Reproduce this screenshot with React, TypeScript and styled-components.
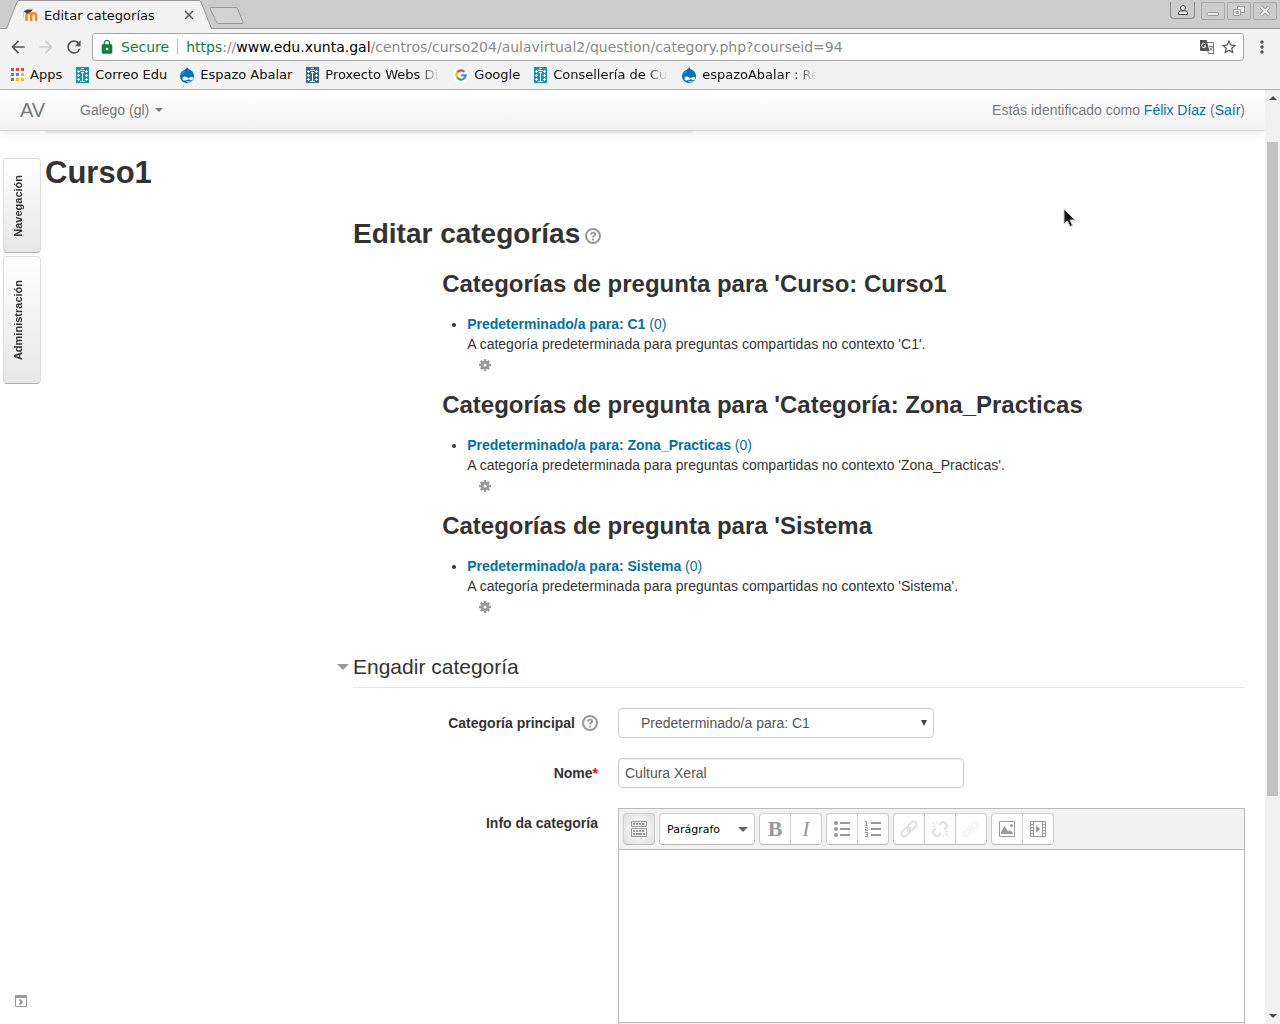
import React from "react";
import styled, { createGlobalStyle, css } from "styled-components";
import { MdArrowBack, MdArrowForward, MdRefresh, MdLock, MdStarBorder, MdMoreVert } from "react-icons/md";

const ui = `"DejaVu Sans", sans-serif`;
const sans = `"Liberation Sans", Arial, sans-serif`;
const serif = `"Liberation Serif", "Times New Roman", serif`;

const GlobalStyle = createGlobalStyle`
  *, *::before, *::after { box-sizing: border-box; }
  body { margin: 0; overflow: hidden; background: #fff; }
  button, input, select { margin: 0; font: inherit; color: inherit; }
  button { padding: 0; border: 0; background: none; cursor: pointer; }
  svg { display: block; flex: none; }
  a { color: #0070a8; text-decoration: none; }
`;

/* ---------- Browser chrome ---------- */

const Browser = styled.div`
  display: flex;
  flex-direction: column;
  height: 100vh;
  overflow: hidden;
`;

const TabStrip = styled.div`
  display: flex;
  justify-content: space-between;
  flex: none;
  height: 29px;
  padding-left: 5px;
  background: #ccc;
  box-shadow: inset 0 -1px #999;
`;

const TabList = styled.div`
  display: flex;
`;

const Tab = styled.div`
  display: flex;
  height: 29px;
`;

const TabBody = styled.div`
  display: flex;
  align-items: center;
  width: 180px;
  padding: 0 2px 0 3px;
  gap: 6px;
  border-top: 1px solid #999;
  background: #f2f2f2;
  font: 13px ${ui};
  color: #111;
`;

const TabTitle = styled.span`
  flex: 1;
  white-space: nowrap;
`;

const NewTab = styled.button`
  display: flex;
  align-items: center;
  height: 29px;
  margin-left: -4px;
`;

const WindowControls = styled.div`
  display: flex;
  gap: 2px;
  padding: 2px 3px 0 0;
`;

const WindowButton = styled.button<{ $profile?: boolean }>`
  display: grid;
  place-items: center;
  width: 24px;
  height: 18px;
  border: 1px solid #aaa;
  border-radius: 2px;
  ${(p) =>
    p.$profile &&
    css`
      width: 25px;
      height: 17px;
      margin-right: 4px;
      border-color: #888;
      border-top: 0;
      border-radius: 0 0 4px 4px;
    `}
`;

const Toolbar = styled.div`
  display: flex;
  align-items: center;
  flex: none;
  height: 36px;
  padding: 0 8px;
  gap: 8px;
  background: #f2f2f2;
  color: #555;
`;

const ToolButton = styled.button<{ $dim?: boolean }>`
  display: grid;
  place-items: center;
  width: 20px;
  height: 20px;
  color: ${(p) => (p.$dim ? "#ccc" : "#555")};
`;

const AddressBar = styled.div`
  display: flex;
  align-items: center;
  flex: 1;
  height: 28px;
  padding: 0 4px 0 6px;
  gap: 8px;
  border: 1px solid #a8a8a8;
  border-radius: 3px;
  background: #fff;
  font: 14px ${ui};
  color: #888;
  white-space: nowrap;
`;

const AddressActions = styled.div`
  display: flex;
  gap: 2px;
`;

const Secure = styled.span`
  display: flex;
  align-items: center;
  gap: 6px;
  padding-right: 8px;
  border-right: 1px solid #bbb;
  line-height: 16px;
  color: #0b8043;
`;

const Url = styled.span`
  flex: 1;
  overflow: hidden;
`;

const Scheme = styled.span`
  color: #0b8043;
`;

const Host = styled.span`
  color: #000;
`;

const Bookmarks = styled.nav`
  display: flex;
  align-items: center;
  flex: none;
  height: 25px;
  padding: 0 9px 4px;
  gap: 12px;
  border-bottom: 1px solid #b0b0b0;
  background: #f2f2f2;
`;

const Bookmark = styled.a`
  display: flex;
  align-items: center;
  gap: 5px;
  font: 13px/16px ${ui};
  color: #111;
  white-space: nowrap;
`;

const BookmarkName = styled.span<{ $fade?: boolean }>`
  max-width: 116px;
  ${(p) =>
    p.$fade &&
    css`
      overflow: hidden;
      mask-image: linear-gradient(to right, #000 80%, transparent 99%);
    `}
`;

/* ---------- Page frame ---------- */

const Viewport = styled.div`
  display: flex;
  flex: 1;
  min-height: 0;
`;

const Page = styled.div`
  position: relative;
  flex: 1;
  min-width: 0;
  overflow: hidden;
  background: #fff;
  font: 14px/20px ${sans};
  color: #333;
`;

const ScrollTrack = styled.div`
  display: flex;
  flex-direction: column;
  justify-content: space-between;
  align-items: center;
  width: 15px;
  padding: 6px 0;
  background: #f1f1f1;
`;

const ScrollThumb = styled.div`
  width: 11px;
  height: 71%;
  margin-bottom: 176px;
  background: #c1c1c1;
`;

const Navbar = styled.header`
  position: relative;
  z-index: 1;
  display: flex;
  align-items: center;
  height: 41px;
  padding: 0 20px;
  border-bottom: 1px solid #d4d4d4;
  background: linear-gradient(#fff, #f2f2f2);
  box-shadow: 0 1px 10px rgba(0, 0, 0, 0.1);
  color: #777;
  text-shadow: 0 1px 0 #fff;
`;

const Brand = styled.a`
  width: 60px;
  font-size: 20px;
  color: #777;
`;

const Language = styled.button`
  display: flex;
  align-items: center;
  gap: 6px;
`;

const LoginInfo = styled.div`
  margin-left: auto;
`;

const Breadcrumb = styled.div`
  width: 54%;
  height: 2px;
  border-radius: 0 0 4px 4px;
  background: #f0f0f0;
`;

const Content = styled.div`
  padding: 0 20px 0 45px;
`;

const CourseTitle = styled.h1`
  margin: 20px 0 21px;
  font: bold 31px/40px ${sans};
`;

const Main = styled.main`
  margin-left: 308px;
`;

const PageTitle = styled.h2`
  margin: 0 0 10px;
  font: bold 28px/40px ${sans};
`;

const HelpButton = styled.button<{ $inline?: boolean }>`
  display: inline-grid;
  place-items: center;
  width: 16px;
  height: 16px;
  margin-left: ${(p) => (p.$inline ? 5 : 0)}px;
  vertical-align: middle;
`;

const Categories = styled.section`
  margin: 0 10%;
`;

const CategoryHeading = styled.h3`
  margin: 10px 0;
  font: bold 24px/40px ${sans};
`;

const CategoryList = styled.ul`
  margin: 0 0 10px 25px;
  padding: 0;
`;

const CategoryActions = styled.div`
  display: flex;
  align-items: center;
  height: 21px;
  padding-left: 12px;
`;

/* ---------- Form ---------- */

const Fieldset = styled.fieldset`
  min-width: 0;
  margin: 30px 0 0;
  padding: 0;
  border: 0;
`;

const Legend = styled.legend`
  width: 100%;
  margin-bottom: 20px;
  padding: 0;
  border-bottom: 1px solid #e5e5e5;
`;

const LegendToggle = styled.button`
  display: flex;
  align-items: center;
  gap: 4px;
  margin-left: -16px;
  font: 21px/40px ${sans};
`;

const Field = styled.div`
  display: grid;
  grid-template-columns: 245px 1fr;
  gap: 20px;
  margin-bottom: 20px;
`;

const FieldLabel = styled.div`
  display: flex;
  justify-content: flex-end;
  align-items: center;
  gap: 7px;
  height: 30px;
  font-weight: bold;
`;

const Required = styled.span`
  color: #f00;
`;

const SelectBox = styled.div`
  display: flex;
  align-items: center;
  width: 316px;
  height: 30px;
  border: 1px solid #ccc;
  border-radius: 4px;
  background: #fff;
  color: #555;

  svg {
    margin-left: -12px;
    pointer-events: none;
  }
`;

const Select = styled.select`
  appearance: none;
  width: 100%;
  height: 28px;
  padding: 0 22px;
  border: 0;
  background: transparent;
`;

const TextInput = styled.input`
  width: 346px;
  height: 30px;
  padding: 4px 6px;
  border: 1px solid #ccc;
  border-radius: 4px;
  background: #fff;
  box-shadow: inset 0 1px 1px rgba(0, 0, 0, 0.075);
  color: #555;
`;

const Editor = styled.div`
  border: 1px solid #bbb;
  background: #f2f2f2;
`;

const EditorTools = styled.div`
  display: flex;
  gap: 4px;
  padding: 4px;
  border-bottom: 1px solid #bbb;
`;

const ToolGroup = styled.div<{ $pressed?: boolean }>`
  display: flex;
  height: 32px;
  border: 1px solid #ccc;
  border-bottom-color: #bbb;
  border-radius: 4px;
  background: ${(p) => (p.$pressed ? "radial-gradient(#fff, #dfdfdf)" : "#fff")};

  button + button {
    width: 31px;
    border-left: 1px solid #ccc;
  }
`;

const EditorButton = styled.button<{ $italic?: boolean }>`
  display: grid;
  place-items: center;
  width: 30px;
  height: 30px;
  font: ${(p) => (p.$italic ? "italic" : "bold")} 22px/30px ${serif};
  color: #999;
`;

const FadedIcon = styled.span<{ $level: number }>`
  opacity: ${(p) => p.$level};
`;

const StyleButton = styled.button`
  display: flex;
  justify-content: space-between;
  align-items: center;
  width: 94px;
  padding: 0 6px 0 7px;
  font: 11px ${ui};
  color: #000;
`;

const EditorBody = styled.div`
  height: 173px;
  margin-bottom: 30px;
  border-bottom: 1px solid #bbb;
  background: #fff;
  outline: 0;
`;

/* ---------- Overlays ---------- */

const Dock = styled.div`
  position: absolute;
  top: 68px;
  left: 3px;
  display: flex;
  flex-direction: column;
  gap: 3px;
`;

const DockTab = styled.button<{ $height: number }>`
  width: 38px;
  height: ${(p) => p.$height}px;
  padding: 0 15px 0 7px;
  border: 1px solid #ddd;
  border-bottom-color: #b3b3b3;
  border-radius: 4px;
  background: linear-gradient(#fff, #e6e6e6);
  font: bold 11px/14px ${sans};

  span {
    display: inline-block;
    writing-mode: vertical-rl;
    transform: rotate(180deg);
    vertical-align: middle;
  }
`;

const DockAll = styled.button`
  position: absolute;
  bottom: 17px;
  left: 15px;
`;

const Pointer = styled.svg`
  position: absolute;
  top: 118px;
  left: 1063px;
`;

/* ---------- Icons ---------- */

const MoodleIcon = () => (
  <svg width="16" height="16" viewBox="0 0 16 16" fill="none">
    <path d="M4.500 14V8.500a2.200 2.200 0 0 1 4.800 0V14M9.300 14V8.500a2.400 2.400 0 0 1 4.800 0V14" stroke="#f98012" strokeWidth="2.300" />
    <path d="M1.500 4.500 5 2.500h6L8.500 5 5 6.500Z" fill="#444" />
    <path d="M1.500 5v5" stroke="#dcc" />
  </svg>
);

const AppsIcon = () => (
  <svg width="16" height="16" viewBox="0 0 16 16">
    {["#ea4335", "#ea4335", "#ea4335", "#34a853", "#4285f4", "#fbbc05", "#34a853", "#fbbc05", "#fbbc05"].map((c, i) => (
      <rect key={i} x={2 + (i % 3) * 5} y={1 + Math.floor(i / 3) * 5} width="3" height="3" fill={c} />
    ))}
  </svg>
);

const XuntaIcon = ({ color }: { color: string }) => (
  <svg width="16" height="16" viewBox="0 0 16 16">
    <path fill={color} d="M2 0h13v16H2z" />
    <path
      stroke="#fff"
      fill="none"
      d="M8.500 5v10M7 1.500h3M6 3.500h5M7 5.500h3M6 14.500h5M4.500 3v3M3 4.500h3M12.500 3v3M11 4.500h3M4.500 7v3M3 8.500h3M12.500 7v3M11 8.500h3M4.500 11v3M3 12.500h3M12.500 11v3M11 12.500h3"
    />
  </svg>
);

const DrupalIcon = () => (
  <svg width="16" height="16" viewBox="0 0 16 16">
    <path fill="#0073ba" d="M8 0c1 2 2.500 2.500 4 3.600A6.800 6.800 0 0 1 15 9.300 6.700 6.700 0 0 1 8.200 16 6.800 6.800 0 0 1 1 9.300c0-2.600 1.300-4.400 3.200-5.700C5.700 2.700 7.500 2 8 0Z" />
    <path fill="#5fb6e6" d="M2 8c.5-2 2-3.500 4-4-1 1.500-2.500 2-4 4Z" />
    <path fill="#fff" d="M5.500 9.500c2 0 3 1.500 4 1.500s2-1.300 3.200-1.300c1 0 1.300.8 1.300 1.600 0 1.200-.6 1.900-1.500 1.900s-1.700-1-2.700-1-2.300 1.300-4 1.300c-1.500 0-2.300-.7-2.300-1.800 0-1.300.8-2.200 2-2.200Z" />
    <path stroke="#fff" fill="none" d="M7.500 14.300c1.500.8 3 .7 4-.1" />
  </svg>
);

const GoogleIcon = () => (
  <svg width="16" height="16" viewBox="0 0 16 16" fill="none" strokeWidth="2.200">
    <circle cx="8" cy="8" r="8" fill="#fff" />
    <path stroke="#ea4335" d="M4.200 5.500A4.700 4.700 0 0 1 11.500 4.800" />
    <path stroke="#fbbc05" d="M4.200 5.500a4.700 4.700 0 0 0 0 5" />
    <path stroke="#34a853" d="M4.200 10.500a4.700 4.700 0 0 0 7 1" />
    <path stroke="#4285f4" d="M11.200 11.500a4.500 4.500 0 0 0 1.500-3.200H8.200" />
  </svg>
);

const TranslateIcon = () => (
  <svg width="16" height="16" viewBox="0 0 16 16">
    <path fill="#fff" stroke="#777" d="M6.500 3.500h8v11h-5z" />
    <path fill="#555" d="M1 1h6.500l3 11H2a1 1 0 0 1-1-1Z" />
    <path fill="none" stroke="#fff" d="M6.500 5A2.200 2.200 0 1 0 7 7H5" />
    <path fill="none" stroke="#777" d="M10 7.500h4M12 6.500v1M13.500 7.500c-.5 2-1.500 3-3 4M11 9c.7 1.200 1.500 2 2.500 2.500" />
  </svg>
);

const Caret = ({ size, color, up }: { size: number; color: string; up?: boolean }) => (
  <svg width={size} height={size / 2} viewBox="0 0 8 4">
    <path fill={color} d={up ? "M0 4h8L4 0z" : "M0 0h8L4 4z"} />
  </svg>
);

const HelpIcon = () => (
  <svg width="16" height="16" viewBox="0 0 16 16" fill="none" stroke="#999" strokeWidth="2">
    <circle cx="8" cy="8" r="7" />
    <path d="M5.800 6.600c0-1.300 1-1.900 2.200-1.900s2.200.7 2.200 1.800c0 1.400-2.200 1.300-2.200 3" strokeWidth="1.800" />
    <path d="M7 10.800h2v1.700H7z" fill="#999" stroke="none" />
  </svg>
);

const GearIcon = () => (
  <svg width="12" height="12" viewBox="0 0 12 12">
    <g stroke="#999" strokeWidth="2.400">
      <path d="M6 0v12M0 6h12M1.800 1.800l8.400 8.400M10.200 1.800l-8.400 8.400" />
    </g>
    <circle cx="6" cy="6" r="4.200" fill="#999" />
    <circle cx="6" cy="6" r="1.500" fill="#fff" />
  </svg>
);

const KeyboardIcon = () => (
  <svg width="16" height="16" viewBox="0 0 16 16" fill="none" stroke="#999">
    <path d="M.5.500h15v5H.5zM.5 7.500h15v8H.5z" />
    <path d="M2 3h12M2 10h12M2 13h2M12 13h2" strokeWidth="2" strokeDasharray="2 1" />
    <path d="M5 13h6" strokeWidth="2" />
  </svg>
);

const BulletsIcon = () => (
  <svg width="16" height="16" viewBox="0 0 16 16" fill="#999">
    <circle cx="2" cy="2" r="2" />
    <circle cx="2" cy="8" r="2" />
    <circle cx="2" cy="14" r="2" />
    <path d="M6 1h10v2H6zM6 7h10v2H6zM6 13h10v2H6z" />
  </svg>
);

const NumbersIcon = () => (
  <svg width="16" height="16" viewBox="0 0 16 16">
    <path fill="#999" d="M6 1h10v2H6zM6 7h10v2H6zM6 13h10v2H6z" />
    <path fill="none" stroke="#999" d="M0 .5h1.500V4M0 4.500h3M0 6.500h2.500v1.500h-2v1.500H3M0 11.500h2.500v4H0M1 13.500h2" />
  </svg>
);

const LinkIcon = ({ broken }: { broken?: boolean }) => (
  <svg width="18" height="18" viewBox="-1 -1 18 18" fill="none" stroke="#999" strokeWidth="2">
    {broken ? (
      <>
        <path d="M7 3.800 8.800 2a3 3 0 0 1 4.300 0l.9.900a3 3 0 0 1 0 4.300L12.200 9M9 12.200 7.200 14a3 3 0 0 1-4.300 0L2 13.100a3 3 0 0 1 0-4.300L3.800 7" />
        <path strokeWidth="1" d="M0 1l3 3M5 0v3M0 5.500h3M16 15l-3-3M11 16v-3M16 10.500h-3" />
      </>
    ) : (
      <g transform="rotate(-45 8 8)">
        <rect x="-1.500" y="5" width="9.500" height="6" rx="3" />
        <rect x="8" y="5" width="9.500" height="6" rx="3" />
        <path d="M5 8h6" />
      </g>
    )}
  </svg>
);

const NoLinkIcon = () => (
  <svg width="16" height="16" viewBox="0 0 16 16" fill="none" stroke="#999" strokeWidth="2">
    <g transform="rotate(-45 8 8)">
      <rect x="-1" y="5.500" width="7" height="5" rx="2.500" />
      <rect x="10" y="5.500" width="7" height="5" rx="2.500" />
      <path d="M8 3v10M5 8h6" />
    </g>
  </svg>
);

const ImageIcon = () => (
  <svg width="16" height="16" viewBox="0 0 16 16" fill="#999">
    <path fill="none" stroke="#999" d="M.5.500h15v15H.5z" />
    <path d="M2 13V11l3.500-6L9 10.500 11 9l3 3v1z" />
    <circle cx="12.500" cy="4.500" r="1.500" />
  </svg>
);

const MediaIcon = () => (
  <svg width="16" height="16" viewBox="0 0 16 16" fill="none" stroke="#999">
    <path d="M.5.500h15v15H.5zM3.500 0v16M12.500 0v16" />
    <path d="M2 3v12M14 3v12" strokeWidth="3" strokeDasharray="1 2" />
    <path fill="#999" stroke="none" d="M6 4.500 10.500 8 6 11.500z" />
  </svg>
);

const DockIcon = () => (
  <svg width="12" height="12" viewBox="0 0 12 12" fill="none" stroke="#999">
    <path d="M.5.500h11v11H.5z" />
    <path d="M0 1.500h12" strokeWidth="3" />
    <path d="M4.500 4.500 7 7 4.500 9.500" strokeWidth="2" />
  </svg>
);

/* ---------- Data ---------- */

const bookmarks = [
  { name: "Apps", icon: <AppsIcon /> },
  { name: "Correo Edu", icon: <XuntaIcon color="#0099cc" /> },
  { name: "Espazo Abalar", icon: <DrupalIcon /> },
  { name: "Proxecto Webs Din", icon: <XuntaIcon color="#2f6ba8" />, fade: true },
  { name: "Google", icon: <GoogleIcon /> },
  { name: "Consellería de Cult", icon: <XuntaIcon color="#0099cc" />, fade: true },
  { name: "espazoAbalar : Rec", icon: <DrupalIcon />, fade: true },
];

const categories = [
  { heading: "Curso: Curso1", context: "C1" },
  { heading: "Categoría: Zona_Practicas", context: "Zona_Practicas" },
  { heading: "Sistema", context: "Sistema" },
];

export default function App() {
  return (
    <Browser>
      <GlobalStyle />
      <TabStrip>
        <TabList>
          <Tab>
            <svg width="14" height="29" viewBox="0 0 14 29">
              <path d="M0 28.500h1.500L13 .5h1V29H0z" fill="#f2f2f2" />
              <path d="M0 28.500h1.500L12 2q.8-1.500 2-1.500" fill="none" stroke="#999" />
            </svg>
            <TabBody>
              <MoodleIcon />
              <TabTitle>Editar categorías</TabTitle>
              <button aria-label="Close tab">
                <svg width="16" height="16" viewBox="0 0 16 16">
                  <path d="M4 4l8 8M12 4l-8 8" stroke="#555" strokeWidth="1.500" />
                </svg>
              </button>
            </TabBody>
            <svg width="14" height="29" viewBox="0 0 14 29">
              <path d="M0 .5h1L12.500 28.500H14V29H0z" fill="#f2f2f2" />
              <path d="M0 .5q1.200 0 2 1.500L12.500 28.500H14" fill="none" stroke="#999" />
            </svg>
          </Tab>
          <NewTab aria-label="New tab">
            <svg width="35" height="18" viewBox="0 0 35 18">
              <path d="M2 1.500h25q1 0 1.500 1.200L34 16q.5 1.500-.8 1.500H9.500Q8 17.500 7.400 16L1.300 3Q1 1.500 2 1.500Z" fill="#d2d2d2" stroke="#999" />
            </svg>
          </NewTab>
        </TabList>
        <WindowControls>
          <WindowButton $profile aria-label="Profile">
            <svg width="12" height="12" viewBox="0 0 12 12" fill="#eee" stroke="#444">
              <path d="M1.500 10.500v-2q0-1.500 2-1.500h5q2 0 2 1.500v2z" />
              <circle cx="6" cy="4" r="2.500" />
            </svg>
          </WindowButton>
          <WindowButton aria-label="Minimize">
            <svg width="12" height="12" viewBox="0 0 12 12">
              <rect x=".5" y="7.500" width="11" height="3" rx="1" fill="#eee" stroke="#999" />
            </svg>
          </WindowButton>
          <WindowButton aria-label="Restore">
            <svg width="12" height="12" viewBox="0 0 12 12" fill="#eee" stroke="#999">
              <path d="M4.500 1.500h7v6h-7z" />
              <path d="M.5 4.500h7v6h-7z" />
              <path d="M3 6.500h2.500v2H3z" fill="#ccc" />
            </svg>
          </WindowButton>
          <WindowButton aria-label="Close">
            <svg width="12" height="12" viewBox="0 0 12 12">
              <path d="M2 2l8 8M10 2l-8 8" stroke="#999" strokeWidth="4" />
              <path d="M2 2l8 8M10 2l-8 8" stroke="#eee" strokeWidth="2" />
            </svg>
          </WindowButton>
        </WindowControls>
      </TabStrip>

      <Toolbar>
        <ToolButton aria-label="Back"><MdArrowBack size={20} /></ToolButton>
        <ToolButton $dim aria-label="Forward"><MdArrowForward size={20} /></ToolButton>
        <ToolButton aria-label="Reload"><MdRefresh size={20} /></ToolButton>
        <AddressBar>
          <Secure><MdLock size={16} />Secure</Secure>
          <Url>
            <Scheme>https</Scheme>://<Host>www.edu.xunta.gal</Host>
            /centros/curso204/aulavirtual2/question/category.php?courseid=94
          </Url>
          <AddressActions>
            <ToolButton aria-label="Translate"><TranslateIcon /></ToolButton>
            <ToolButton aria-label="Bookmark this page"><MdStarBorder size={18} /></ToolButton>
          </AddressActions>
        </AddressBar>
        <ToolButton aria-label="Menu"><MdMoreVert size={20} /></ToolButton>
      </Toolbar>

      <Bookmarks>
        {bookmarks.map((b) => (
          <Bookmark href="#" key={b.name}>
            {b.icon}
            <BookmarkName $fade={b.fade}>{b.name}</BookmarkName>
          </Bookmark>
        ))}
      </Bookmarks>

      <Viewport>
        <Page>
          <Navbar>
            <Brand href="#">AV</Brand>
            <Language>Galego (gl)<Caret size={8} color="#777" /></Language>
            <LoginInfo>
              Estás identificado como <a href="#">Félix Díaz</a> (<a href="#">Saír</a>)
            </LoginInfo>
          </Navbar>

          <Content>
            <Breadcrumb />
            <CourseTitle>Curso1</CourseTitle>
            <Main>
              <PageTitle>
                Editar categorías
                <HelpButton $inline aria-label="Axuda"><HelpIcon /></HelpButton>
              </PageTitle>

              <Categories>
                {categories.map((c) => (
                  <React.Fragment key={c.context}>
                    <CategoryHeading>Categorías de pregunta para '{c.heading}</CategoryHeading>
                    <CategoryList>
                      <li>
                        <a href="#"><b>Predeterminado/a para: {c.context}</b> (0)</a>
                        <div>A categoría predeterminada para preguntas compartidas no contexto '{c.context}'.</div>
                        <CategoryActions>
                          <button aria-label="Editar"><GearIcon /></button>
                        </CategoryActions>
                      </li>
                    </CategoryList>
                  </React.Fragment>
                ))}
              </Categories>

              <form>
                <Fieldset>
                  <Legend>
                    <LegendToggle type="button">
                      <Caret size={12} color="#999" />
                      Engadir categoría
                    </LegendToggle>
                  </Legend>
                  <Field>
                    <FieldLabel>
                      <label htmlFor="parent">Categoría principal</label>
                      <HelpButton type="button" aria-label="Axuda"><HelpIcon /></HelpButton>
                    </FieldLabel>
                    <SelectBox>
                      <Select id="parent">
                        <option>Predeterminado/a para: C1</option>
                      </Select>
                      <svg width="6" height="6" viewBox="0 0 6 6"><path d="M0 0h6L3 6z" fill="#444" /></svg>
                    </SelectBox>
                  </Field>
                  <Field>
                    <FieldLabel>
                      <label htmlFor="name">Nome<Required>*</Required></label>
                    </FieldLabel>
                    <TextInput id="name" defaultValue="Cultura Xeral" />
                  </Field>
                  <Field>
                    <FieldLabel>
                      <span id="info-label">Info da categoría</span>
                    </FieldLabel>
                    <Editor>
                      <EditorTools>
                        <ToolGroup $pressed>
                          <EditorButton type="button" aria-label="Toggle toolbar"><KeyboardIcon /></EditorButton>
                        </ToolGroup>
                        <ToolGroup>
                          <StyleButton type="button">Parágrafo<Caret size={10} color="#666" /></StyleButton>
                        </ToolGroup>
                        <ToolGroup>
                          <EditorButton type="button">B</EditorButton>
                          <EditorButton type="button" $italic>I</EditorButton>
                        </ToolGroup>
                        <ToolGroup>
                          <EditorButton type="button" aria-label="Bullets"><BulletsIcon /></EditorButton>
                          <EditorButton type="button" aria-label="Numbers"><NumbersIcon /></EditorButton>
                        </ToolGroup>
                        <ToolGroup>
                          <EditorButton type="button" aria-label="Link"><FadedIcon $level={0.3}><LinkIcon /></FadedIcon></EditorButton>
                          <EditorButton type="button" aria-label="Unlink"><FadedIcon $level={0.3}><LinkIcon broken /></FadedIcon></EditorButton>
                          <EditorButton type="button" aria-label="No auto-link"><FadedIcon $level={0.1}><NoLinkIcon /></FadedIcon></EditorButton>
                        </ToolGroup>
                        <ToolGroup>
                          <EditorButton type="button" aria-label="Image"><ImageIcon /></EditorButton>
                          <EditorButton type="button" aria-label="Media"><MediaIcon /></EditorButton>
                        </ToolGroup>
                      </EditorTools>
                      <EditorBody contentEditable suppressContentEditableWarning role="textbox" aria-labelledby="info-label" />
                    </Editor>
                  </Field>
                </Fieldset>
              </form>
            </Main>
          </Content>

          <Dock>
            <DockTab $height={95}><span>Navegación</span></DockTab>
            <DockTab $height={128}><span>Administración</span></DockTab>
          </Dock>
          <DockAll aria-label="Dock all blocks"><DockIcon /></DockAll>
          <Pointer width="13" height="20" viewBox="0 0 13 20">
            <path d="M1 1v15l3.500-3 2.500 5.500 2.500-1L7 12h5z" fill="#111" stroke="#ccc" />
          </Pointer>
        </Page>
        <ScrollTrack>
          <Caret size={8} color="#505050" up />
          <ScrollThumb />
          <Caret size={8} color="#505050" />
        </ScrollTrack>
      </Viewport>
    </Browser>
  );
}
